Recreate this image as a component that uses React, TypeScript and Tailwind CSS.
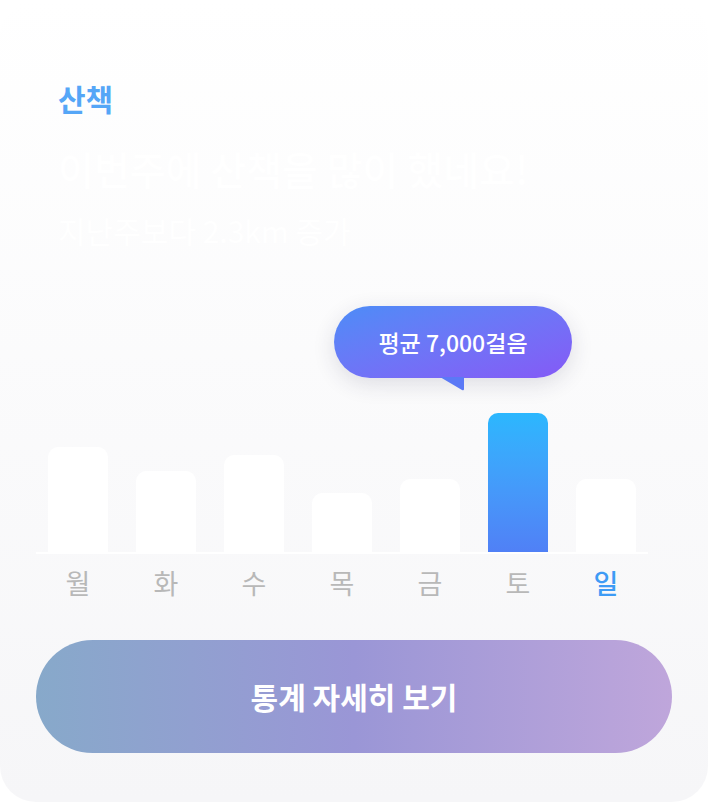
import React from "react";

interface Bar {
  day: string;
  height: number;
  active?: boolean;
  today?: boolean;
}

const bars: Bar[] = [
  { day: "월", height: 105 },
  { day: "화", height: 81 },
  { day: "수", height: 97 },
  { day: "목", height: 59 },
  { day: "금", height: 73 },
  { day: "토", height: 139, active: true },
  { day: "일", height: 73, today: true },
];

const font = { fontFamily: '"Noto Sans CJK KR", "Noto Sans", sans-serif' };

const Tooltip: React.FC = () => (
  <div className="absolute left-[298px] top-[16px]">
    <div className="relative flex h-[72px] w-[238px] items-center justify-center rounded-full bg-linear-to-br from-[#4b8cf7] to-[#8459f6] shadow-[0_6px_22px_rgba(40,40,80,0.14)]">
      <span className="text-[23px] font-medium leading-none text-white">
        평균 7,000걸음
      </span>
    </div>
    <svg
      className="absolute left-[106px] top-[71px]"
      width="26"
      height="15"
      viewBox="0 0 26 15"
    >
      <path d="M0 0 L24 0 L24 12 Q24 14 22 13 Z" fill="#5b79f6" />
    </svg>
  </div>
);

const WalkCard: React.FC = () => {
  return (
    <div
      className="flex h-[802px] w-full flex-col rounded-[36px] bg-linear-to-b from-white to-[#f6f6f8] px-9 pt-[80px]"
      style={font}
    >
      <div className="pl-[22px]">
        <p className="text-[30px] font-bold leading-[36px] text-[#55a6f7]">산책</p>
        <p className="mt-[30px] text-[39px] font-medium leading-[44px] text-white">
          이번주에 산책을 많이 했네요!
        </p>
        <p className="mt-[22px] text-[30px] leading-[36px] text-white">
          지난주보다 2.3km 증가
        </p>
      </div>

      <div className="relative mt-[42px] w-[612px]">
        <div className="flex h-[262px] items-end gap-[28px] px-3">
          {bars.map((bar) => (
            <div
              key={bar.day}
              className={
                bar.active
                  ? "w-[60px] rounded-t-[10px] bg-linear-to-b from-[#2bb7fe] to-[#5080f6]"
                  : "w-[60px] rounded-t-[10px] bg-white"
              }
              style={{ height: bar.height }}
            />
          ))}
        </div>
        <div className="h-[2px] bg-white" />
        <div className="mt-[13px] flex gap-[28px] px-3">
          {bars.map((bar) => (
            <span
              key={bar.day}
              className={
                bar.today
                  ? "w-[60px] text-center text-[27px] font-medium leading-[32px] text-[#3e9bf5]"
                  : "w-[60px] text-center text-[27px] leading-[32px] text-[#b8b8b8]"
              }
            >
              {bar.day}
            </span>
          ))}
        </div>
        <Tooltip />
      </div>

      <button className="mt-[41px] flex h-[113px] w-full items-center justify-center rounded-full bg-linear-to-r from-[#87a9ca] via-[#9a96d6] to-[#bfa6db]">
        <span className="text-[30px] font-bold text-white">통계 자세히 보기</span>
      </button>
    </div>
  );
};

export default function App() {
  return (
    <div className="bg-white">
      <WalkCard />
    </div>
  );
}
